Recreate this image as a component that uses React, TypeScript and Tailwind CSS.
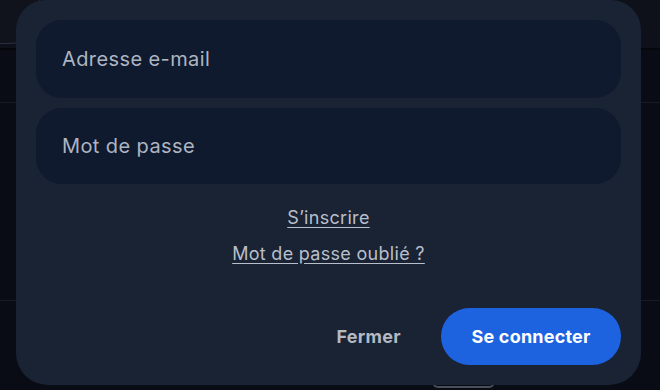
export default function App() {
  return (
    <div className="relative w-[660px] h-[390px] overflow-hidden bg-[#090c15] font-['Inter','Noto_Sans',sans-serif]">
      {/* page behind the dialog */}
      <div className="relative h-[50px] overflow-hidden bg-[#0e111a] border-b-2 border-[#05070c]">
        <div className="absolute -top-[20px] -left-[30px] w-[72px] h-[64px] rounded-[32px] border border-[#2a3040] bg-[#10131c]" />
      </div>
      <div className="mt-[52px] border-t border-[#151a25]" />
      <div className="mt-[197px] border-t border-[#151a25]" />
      <div className="absolute left-[432px] top-[372px] w-[63px] h-[16px] rounded-[6px] border-2 border-[#4a4f5a]" />

      {/* dialog */}
      <div className="absolute left-[16px] top-0 w-[625px] h-[385px] rounded-b-[32px] rounded-t-[30px] bg-[#1a2334] px-[20px] pt-[20px] pb-[20px] flex flex-col">
        <div className="flex flex-col gap-[10px]">
          <div className="h-[78px] rounded-[26px] bg-[#0f1a2e] flex items-center px-[26px] text-[20px] tracking-[0.4px] text-[#aeb5c2]">
            Adresse e-mail
          </div>
          <div className="h-[76px] rounded-[26px] bg-[#0f1a2e] flex items-center px-[26px] text-[20px] tracking-[0.4px] text-[#aeb5c2]">
            Mot de passe
          </div>
        </div>
        <div className="mt-[22px] flex flex-col items-center gap-[12px] text-[18px] tracking-[0.3px] text-[#b9bfca]">
          <a className="underline underline-offset-[3px] leading-[24px]">S’inscrire</a>
          <a className="underline underline-offset-[3px] leading-[24px]">Mot de passe oublié ?</a>
        </div>
        <div className="mt-auto flex items-center justify-end gap-[40px]">
          <button className="text-[18px] font-bold tracking-[0.3px] text-[#b4b9c2]">Fermer</button>
          <button className="h-[57px] w-[180px] rounded-full bg-[#1d63e0] text-[18px] font-bold tracking-[0.2px] text-white">
            Se connecter
          </button>
        </div>
      </div>
    </div>
  );
}
